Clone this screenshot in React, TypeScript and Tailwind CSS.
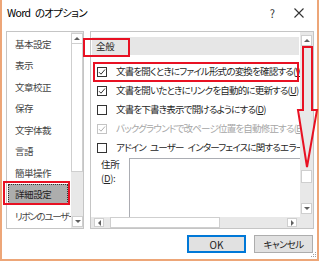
import React from "react";

const jp = "font-['Noto_Sans_CJK_JP','Liberation_Sans',sans-serif] [font-feature-settings:'palt']";

const menu = ["基本設定", "表示", "文章校正", "保存", "文字体裁", "言語", "簡単操作", "詳細設定", "リボンのユーザー設定"];

const Tri = ({ dir }: { dir: "up" | "down" | "left" | "right" }) => {
    const pts = {
        up: "0,4 3,1 6,4",
        down: "0,1 3,4 6,1",
        left: "4,0 1,3 4,6",
        right: "1,0 4,3 1,6",
    }[dir];
    const w = dir === "up" || dir === "down" ? 6 : 5;
    const h = dir === "up" || dir === "down" ? 5 : 6;
    return (
        <svg width={w} height={h} viewBox={`0 0 ${w} ${h}`}>
            <polygon points={pts} fill="#606060" />
        </svg>
    );
};

const ArrowBox = ({ dir, className }: { dir: "up" | "down" | "left" | "right"; className: string }) => (
    <div className={`flex items-center justify-center bg-white border border-[#cfcfcf] ${className}`}>
        <Tri dir={dir} />
    </div>
);

const Checkbox = ({ checked, disabled }: { checked: boolean; disabled?: boolean }) => (
    <div className={`w-[10px] h-[10px] shrink-0 border bg-white flex items-center justify-center ${disabled ? "border-[#c4c4c4]" : "border-[#333333]"}`}>
        {checked && (
            <svg width="8" height="8" viewBox="0 0 8 8">
                <path d="M1 4.2 L3 6.2 L7 1.5" fill="none" stroke={disabled ? "#b0b0b0" : "#333333"} strokeWidth="1" />
            </svg>
        )}
    </div>
);

const Row = ({ checked, disabled, children }: { checked: boolean; disabled?: boolean; children: React.ReactNode }) => (
    <div className={`h-[19px] flex items-center gap-[9px] pl-[6px] whitespace-pre text-[9.5px] tracking-[-0.8px] ${disabled ? "text-[#a6a6a6]" : "text-[#262626]"}`}>
        <Checkbox checked={checked} disabled={disabled} />
        <span>{children}</span>
    </div>
);

export default function App() {
    return (
        <div className={`w-[320px] h-[262px] bg-white relative overflow-hidden ${jp}`}>
            <div className="w-[319px] h-[261px] border-2 border-t-0 border-[#eda678] flex flex-col pl-[4px] pr-[3px]">
                {/* title bar */}
                <div className="h-[31px] flex items-start pt-[5px] shrink-0">
                    <span className="ml-[1px] text-[10.5px] tracking-[-0.7px] leading-[16px] text-black whitespace-pre">Word{"\u2002"}のオプション</span>
                    <span className="ml-auto text-[11px] leading-[16px] text-[#333333]">?</span>
                    <svg className="ml-[19px] mr-[10px] mt-[3px]" width="10" height="10" viewBox="0 0 10 10">
                        <path d="M0.5 0.5 L9.5 9.5 M9.5 0.5 L0.5 9.5" stroke="#333333" strokeWidth="1.1" />
                    </svg>
                </div>

                {/* body */}
                <div className="h-[198px] flex gap-[6px] shrink-0">
                    {/* category list */}
                    <div className="w-[78px] h-full border border-[#c5c5c5] flex">
                        <div className="w-[64px] pt-[1px] overflow-hidden">
                            {menu.map((m) =>
                                m === "詳細設定" ? (
                                    <div key={m} className="h-[21.5px] flex items-center">
                                        <div className="ml-[1px] w-[60px] h-[20px] bg-[#adadad] border border-dotted border-[#333333] pl-[6px] flex items-center text-[9.5px] tracking-[-0.4px] text-[#222222] whitespace-nowrap">
                                            {m}
                                        </div>
                                    </div>
                                ) : (
                                    <div
                                        key={m}
                                        className={`h-[21.5px] flex items-center pl-[8px] text-[9.5px] text-[#444444] whitespace-nowrap ${m.length > 4 ? "tracking-[-1.3px]" : "tracking-[-0.5px]"}`}
                                    >
                                        {m}
                                    </div>
                                )
                            )}
                        </div>
                        <div className="w-[12px] h-full bg-[#e8e8e8] flex flex-col">
                            <ArrowBox dir="up" className="h-[11px] mt-[1px]" />
                            <div className="h-[128px] bg-white border border-[#cfcfcf] border-t-0" />
                            <div className="flex-1" />
                            <ArrowBox dir="down" className="h-[11px] mb-[1px] ml-[1px]" />
                        </div>
                    </div>

                    {/* settings panel */}
                    <div className="w-[224px] h-full border border-[#c5c5c5] flex flex-col">
                        <div className="h-[185px] flex">
                            <div className="w-[209px] overflow-hidden pt-[5px]">
                                <div className="h-[18px] mx-[1px] bg-[#e6e6e6] pl-[4px] flex items-center text-[9.5px] tracking-[-0.3px] text-[#262626]">全般</div>
                                <div className="mt-[7px]">
                                    <Row checked>文書を開くときにファイル形式の変換を確認する(<span className="underline">V</span>)</Row>
                                    <Row checked>文書を開いたときにリンクを自動的に更新する(<span className="underline">U</span>)</Row>
                                    <Row checked={false}>文書を下書き表示で開けるようにする(<span className="underline">D</span>)</Row>
                                    <Row checked disabled>バックグラウンドで改ページ位置を自動修正する(<span className="underline">B</span>)</Row>
                                    <Row checked={false}>アドイン{"\u2002"}ユーザー{"\u2002"}インターフェイスに関するエラーを表示する(<span className="underline">U</span>)</Row>
                                </div>
                                <div className="flex pl-[10px]">
                                    <div className="w-[28px] shrink-0 text-[9.5px] tracking-[-0.3px] leading-[14px] text-[#262626]">
                                        <div>住所</div>
                                        <div>(<span className="underline">D</span>):</div>
                                    </div>
                                    <div className="mt-[1px] w-[250px] h-[80px] shrink-0 border border-[#abadb3] bg-white" />
                                </div>
                            </div>
                            <div className="w-[13px] h-full bg-[#e8e8e8] flex flex-col items-center pt-[3px]">
                                <ArrowBox dir="up" className="w-[11px] h-[11px]" />
                                <div className="mt-[124px] w-[11px] h-[13px] bg-white border border-[#cfcfcf]" />
                                <ArrowBox dir="down" className="mt-[20px] w-[11px] h-[11px]" />
                            </div>
                        </div>
                        <div className="h-[11px] bg-[#e8e8e8] flex items-center">
                            <ArrowBox dir="left" className="ml-[3px] w-[10px] h-[9px]" />
                            <div className="ml-[6px] w-[110px] h-[11px] bg-white border border-[#cfcfcf]" />
                            <ArrowBox dir="right" className="ml-[67px] w-[10px] h-[9px]" />
                        </div>
                    </div>
                </div>

                {/* buttons */}
                <div className="mt-[6px] flex justify-end gap-[8px] pr-[1px]">
                    <button className="w-[59px] h-[18px] border-2 border-[#0078d7] bg-[#e1e1e1] text-[10px] text-[#222222] flex items-center justify-center">OK</button>
                    <button className="w-[59px] h-[18px] border border-[#adadad] bg-[#e1e1e1] text-[9.5px] tracking-[-0.6px] text-[#222222] flex items-center justify-center">キャンセル</button>
                </div>
            </div>

            {/* resize grip */}
            <svg className="absolute left-[311px] top-[252px]" width="6" height="6" viewBox="0 0 6 6">
                <rect x="4" y="0" width="1" height="1" fill="#a0a0a0" />
                <rect x="2" y="2" width="1" height="1" fill="#a0a0a0" />
                <rect x="4" y="2" width="1" height="1" fill="#a0a0a0" />
                <rect x="0" y="4" width="1" height="1" fill="#a0a0a0" />
                <rect x="2" y="4" width="1" height="1" fill="#a0a0a0" />
                <rect x="4" y="4" width="1" height="1" fill="#a0a0a0" />
            </svg>

            {/* red annotations */}
            <div className="absolute left-[83px] top-[38px] w-[47px] h-[19px] border-2 border-[#e81123]" />
            <div className="absolute left-[93px] top-[62px] w-[206px] h-[20px] border-2 border-[#e81123]" />
            <div className="absolute left-[3px] top-[181px] w-[67px] h-[24px] border-2 border-[#e81123]" />
            <svg className="absolute left-0 top-0" width="320" height="262" viewBox="0 0 320 262">
                <polygon
                    points="303,47 312,47 312,110 317,110 307,167 298,110 303,110"
                    fill="none"
                    stroke="#e81123"
                    strokeWidth="2"
                    strokeLinejoin="miter"
                />
            </svg>
        </div>
    );
}
